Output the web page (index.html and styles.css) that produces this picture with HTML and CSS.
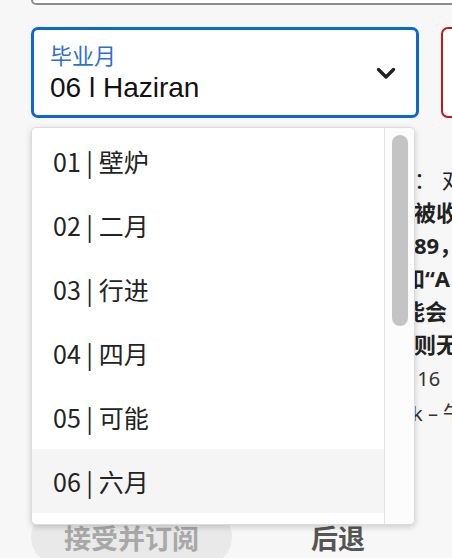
FILE: index.html
```html
<!DOCTYPE html>
<html lang="zh">
<head>
<meta charset="utf-8">
<title>毕业月</title>
<link rel="stylesheet" href="styles.css">
</head>
<body>
<div class="page">
  <div class="prev-field"></div>

  <div class="field-row">
    <div class="select">
      <div class="select-text">
        <div class="select-label">毕业月</div>
        <div class="select-value">06 l Haziran</div>
      </div>
      <svg class="chevron" width="20" height="13" viewBox="0 0 20 13" aria-hidden="true">
        <path d="M2.5 2.5 L10 10 L17.5 2.5" fill="none" stroke="#222" stroke-width="3.4" stroke-linecap="round" stroke-linejoin="round"/>
      </svg>
    </div>
    <div class="field-error"></div>
  </div>

  <div class="terms">
    <p class="line">款：&nbsp;对</p>
    <p class="line bold">将被收</p>
    <p class="line bold">于89，</p>
    <p class="line bold"><span class="half">s</span>和“A</p>
    <p class="line bold"><span class="half">s</span>能会</p>
    <p class="line bold">否则无</p>
    <p class="line small">至 16</p>
    <p class="line small">于k – 午</p>
  </div>

  <div class="actions">
    <button class="btn-primary">接受并订阅</button>
    <button class="btn-back">后退</button>
  </div>

  <div class="dropdown">
    <ul class="options">
      <li class="option">01 | 壁炉</li>
      <li class="option">02 | 二月</li>
      <li class="option">03 | 行进</li>
      <li class="option">04 | 四月</li>
      <li class="option">05 | 可能</li>
      <li class="option is-active">06 | 六月</li>
      <li class="option">07 | 七月</li>
    </ul>
    <div class="scroll-track">
      <div class="scroll-thumb"></div>
    </div>
  </div>
</div>
</body>
</html>
```

FILE: styles.css
```css
html, body {
  margin: 0;
  padding: 0;
}
body {
  background: #f7f7f7;
  width: 452px;
  height: 558px;
  overflow: hidden;
  font-family: "Noto Sans", "Noto Sans CJK SC", sans-serif;
  color: #222;
}
.page {
  position: relative;
  padding-left: 31px;
  height: 558px;
}
.prev-field {
  width: 500px;
  height: 3px;
  border: 2px solid #8c8c8c;
  border-top: 0;
  border-radius: 0 0 7px 7px;
  background: #fff;
}
.field-row {
  display: flex;
  gap: 22px;
  margin-top: 22px;
}
.select {
  box-sizing: border-box;
  width: 388px;
  height: 91px;
  flex: none;
  border: 3px solid #0d66d6;
  border-radius: 7px;
  background: #fff;
  display: flex;
  align-items: center;
  justify-content: space-between;
  padding: 0 20px 0 16px;
}
.select-text {
  display: flex;
  flex-direction: column;
  gap: 6px;
  padding-top: 1px;
}
.select-label {
  font-family: "Noto Sans CJK SC", sans-serif;
  font-size: 22px;
  line-height: 24px;
  color: #2d6fd4;
}
.select-value {
  font-family: "Liberation Sans", Arial, sans-serif;
  font-size: 28px;
  line-height: 32px;
  color: #111;
}
.chevron {
  display: block;
  flex: none;
  margin-top: 1px;
}
.field-error {
  box-sizing: border-box;
  width: 100px;
  height: 91px;
  flex: none;
  border: 2px solid #c3161d;
  border-radius: 7px;
  background: #fff;
}
.terms {
  margin-top: 45px;
  padding-left: 361px;
  white-space: nowrap;
}
.line {
  margin: 0;
  font-family: "Noto Sans", "Noto Sans CJK SC", sans-serif;
  font-size: 22px;
  line-height: 33px;
  color: #222;
}
.line.bold {
  font-weight: 700;
}
.line.small {
  font-size: 20px;
  line-height: 35px;
  color: #333;
}
.half {
  color: #222;
}
.actions {
  display: flex;
  align-items: center;
  gap: 24px;
  margin-top: 78px;
}
.btn-primary {
  width: 201px;
  height: 56px;
  border: 0;
  border-radius: 28px;
  background: #e9e9e9;
  color: #a8a8a8;
  font-family: "Noto Sans CJK SC", sans-serif;
  font-size: 27px;
  font-weight: 700;
  padding: 0;
}
.btn-back {
  width: 164px;
  height: 56px;
  border: 0;
  background: transparent;
  color: #555;
  font-family: "Noto Sans CJK SC", sans-serif;
  font-size: 27px;
  font-weight: 700;
  padding: 0;
}
.dropdown {
  position: absolute;
  top: 127px;
  left: 31px;
  width: 384px;
  height: 398px;
  box-sizing: border-box;
  border: 1px solid #dcdcdc;
  border-radius: 5px;
  background: #fff;
  box-shadow: 0 2px 6px rgba(0, 0, 0, 0.18);
  display: flex;
  overflow: hidden;
}
.options {
  list-style: none;
  margin: 0;
  padding: 1px 0 0;
  flex: 1;
}
.option {
  height: 64px;
  display: flex;
  align-items: center;
  padding-left: 21px;
  font-family: "Noto Sans CJK SC", sans-serif;
  font-size: 25px;
  color: #232323;
}
.option.is-active {
  background: #f5f5f5;
}
.scroll-track {
  width: 29px;
  flex: none;
  border-left: 1px solid #e4e4e4;
  background: #fcfcfc;
}
.scroll-thumb {
  width: 16px;
  height: 191px;
  margin: 7px 0 0 7px;
  border-radius: 8px;
  background: #c4c4c4;
}
```
